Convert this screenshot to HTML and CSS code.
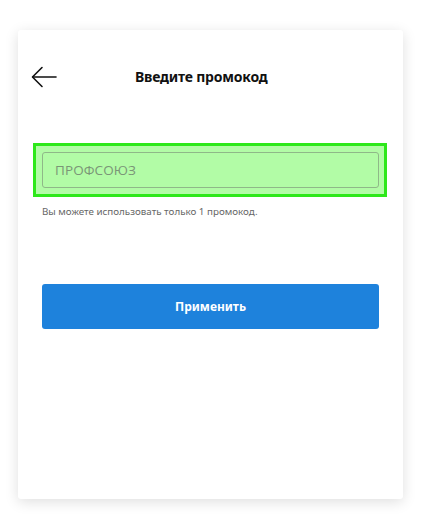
FILE: index.html
```html
<!DOCTYPE html>
<html lang="ru">
<head>
<meta charset="utf-8">
<link rel="stylesheet" href="styles.css">
</head>
<body>
<div class="page">
  <div class="card">
    <div class="header">
      <button class="back" aria-label="Назад">
        <svg width="26" height="22" viewBox="0 0 26 22" fill="none" stroke="#111" stroke-width="1.6" stroke-linecap="round" stroke-linejoin="round">
          <path d="M25 11H2"/>
          <path d="M11 1.5L1.5 11L11 20.5"/>
        </svg>
      </button>
      <h1 class="title">Введите промокод</h1>
    </div>
    <div class="content">
      <div class="highlight">
        <div class="input">ПРОФСОЮЗ</div>
      </div>
      <p class="hint">Вы можете использовать только 1 промокод.</p>
      <button class="apply">Применить</button>
    </div>
  </div>
</div>
</body>
</html>
```
FILE: styles.css
```css
* { box-sizing: border-box; }
html, body { margin: 0; padding: 0; background: #fff; }
body { font-family: "Noto Sans", "Open Sans", sans-serif; }

.page {
  padding: 30px 18px 30px 18px;
}

.card {
  width: 385px;
  height: 469px;
  background: #fff;
  border-radius: 3px;
  box-shadow: 0 3px 14px rgba(0, 0, 0, 0.13);
}

.header {
  display: flex;
  align-items: center;
  height: 93px;
  padding: 0 0 0 13px;
}

.back {
  background: none;
  border: 0;
  padding: 0;
  width: 26px;
  height: 22px;
  display: flex;
}

.title {
  margin: 0 0 0 78px;
  font-size: 14px;
  font-weight: 700;
  color: #111;
  letter-spacing: -0.2px;
}

.content {
  padding: 20px 24px 0 24px;
}

.highlight {
  margin: 0 -8px 0 -9px;
  border: 3px solid #2de81a;
  background: #b2fca6;
  padding: 6px 5px 6px 6px;
}

.input {
  height: 36px;
  border: 1px solid #8fb888;
  border-radius: 3px;
  display: flex;
  align-items: center;
  padding-left: 12px;
  font-family: "Open Sans", sans-serif;
  font-size: 13.5px;
  color: #7a9677;
  letter-spacing: 0.1px;
}

.hint {
  margin: 8px 0 0 0;
  font-size: 9.8px;
  color: #666;
  line-height: 14px;
}

.apply {
  display: block;
  width: 100%;
  height: 45px;
  margin-top: 65px;
  border: 0;
  border-radius: 3px;
  background: #1e82dc;
  color: #fff;
  font-family: "Noto Sans", sans-serif;
  font-weight: 700;
  font-size: 12px;
}
```
